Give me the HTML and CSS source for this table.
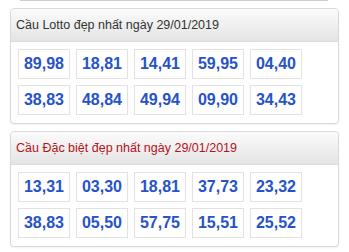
FILE: index.html
```html
<!DOCTYPE html>
<html>
<head>
<meta charset="utf-8">
<link rel="stylesheet" href="styles.css">
</head>
<body>
<div class="page">
  <div class="topline"></div>
  <div class="panel">
    <div class="panel-head">Cầu Lotto đẹp nhất ngày 29/01/2019</div>
    <div class="grid">
      <div class="cell">89,98</div>
      <div class="cell">18,81</div>
      <div class="cell">14,41</div>
      <div class="cell">59,95</div>
      <div class="cell">04,40</div>
      <div class="cell">38,83</div>
      <div class="cell">48,84</div>
      <div class="cell">49,94</div>
      <div class="cell">09,90</div>
      <div class="cell">34,43</div>
    </div>
  </div>
  <div class="panel">
    <div class="panel-head red">Cầu Đặc biệt đẹp nhất ngày 29/01/2019</div>
    <div class="grid">
      <div class="cell">13,31</div>
      <div class="cell">03,30</div>
      <div class="cell">18,81</div>
      <div class="cell">37,73</div>
      <div class="cell">23,32</div>
      <div class="cell">38,83</div>
      <div class="cell">05,50</div>
      <div class="cell">57,75</div>
      <div class="cell">15,51</div>
      <div class="cell">25,52</div>
    </div>
  </div>
</div>
</body>
</html>
```
FILE: styles.css
```css
html, body {
  margin: 0;
  padding: 0;
  background: #ffffff;
}
body {
  font-family: "Liberation Sans", Arial, sans-serif;
}
.page {
  padding: 0 0 0 10px;
  width: 329px;
}
.topline {
  height: 1px;
  margin: 0 11px 7px 10px;
  background: #c9ced6;
}
.panel {
  border: 1px solid #d9d9d9;
  border-radius: 4px;
  margin-bottom: 7px;
  background: #fff;
  box-shadow: 0 1px 2px rgba(0,0,0,0.06);
}
.panel-head {
  height: 32px;
  line-height: 33px;
  padding-left: 5px;
  font-size: 12.5px;
  color: #333333;
  background: linear-gradient(#fbfbfb, #e4e4e4);
  border-bottom: 1px solid #dcdcdc;
  border-radius: 4px 4px 0 0;
}
.panel-head.red {
  color: #b5121b;
}
.grid {
  display: grid;
  grid-template-columns: repeat(5, 52px);
  grid-auto-rows: 30px;
  gap: 6px;
  padding: 7px 7px 8px 7px;
}
.cell {
  border: 1px solid #e2e2e2;
  box-sizing: border-box;
  display: flex;
  align-items: center;
  justify-content: center;
  font-size: 16px;
  font-weight: bold;
  color: #2653c9;
}
```
